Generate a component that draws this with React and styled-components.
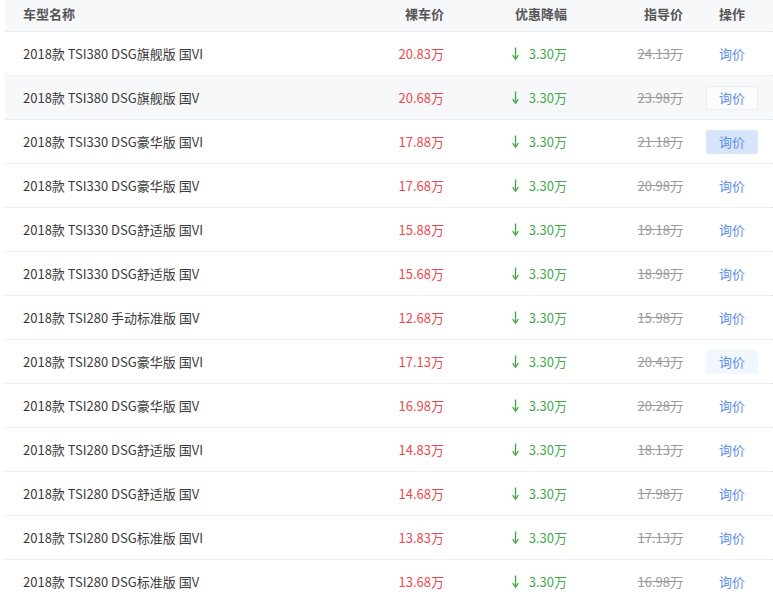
import React from 'react';
import styled, { createGlobalStyle, css } from 'styled-components';

const GlobalStyle = createGlobalStyle`
  body {
    margin: 0;
    background: #fff;
    font-family: "Microsoft YaHei", "Noto Sans CJK SC", "Noto Sans", sans-serif;
  }
`;

const rows = [
  { name: '2018款 TSI380 DSG旗舰版 国VI', price: '20.83万', guide: '24.13万' },
  { name: '2018款 TSI380 DSG旗舰版 国V', price: '20.68万', guide: '23.98万', hover: true, btn: 'outline' },
  { name: '2018款 TSI330 DSG豪华版 国VI', price: '17.88万', guide: '21.18万', btn: 'active' },
  { name: '2018款 TSI330 DSG豪华版 国V', price: '17.68万', guide: '20.98万' },
  { name: '2018款 TSI330 DSG舒适版 国VI', price: '15.88万', guide: '19.18万' },
  { name: '2018款 TSI330 DSG舒适版 国V', price: '15.68万', guide: '18.98万' },
  { name: '2018款 TSI280 手动标准版 国V', price: '12.68万', guide: '15.98万' },
  { name: '2018款 TSI280 DSG豪华版 国VI', price: '17.13万', guide: '20.43万', btn: 'soft' },
  { name: '2018款 TSI280 DSG豪华版 国V', price: '16.98万', guide: '20.28万' },
  { name: '2018款 TSI280 DSG舒适版 国VI', price: '14.83万', guide: '18.13万' },
  { name: '2018款 TSI280 DSG舒适版 国V', price: '14.68万', guide: '17.98万' },
  { name: '2018款 TSI280 DSG标准版 国VI', price: '13.83万', guide: '17.13万' },
  { name: '2018款 TSI280 DSG标准版 国V', price: '13.68万', guide: '16.98万' },
];

const Table = styled.div`
  margin-left: 5px;
  width: 768px;
  font-size: 13px;
`;

const Line = styled.div`
  display: grid;
  grid-template-columns: 1fr 110px 123px 116px 77px;
  align-items: center;
  box-sizing: border-box;
  border-bottom: 1px dotted #e2e2e2;
`;

const HeadLine = styled(Line)`
  height: 32px;
  padding-bottom: 4px;
  background: #f7f8fa;
  color: #555;
  font-weight: bold;
`;

const BodyLine = styled(Line)`
  height: 44px;
  background: ${p => (p.$hover ? '#f7f8fa' : '#fff')};
`;

const Cell = styled.div`
  text-align: ${p => p.$align || 'right'};
  padding-right: ${p => (p.$align === 'left' ? 0 : p.$align === 'center' ? 5 : 13)}px;
  padding-left: ${p => (p.$align === 'left' ? 18 : 0)}px;
  white-space: nowrap;
`;

const Name = styled(Cell)`
  color: #3a3a3a;
`;

const Price = styled(Cell)`
  color: #ea4a4f;
`;

const Cut = styled(Cell)`
  color: #9a9a9a;
  text-decoration: line-through;
`;

const Discount = styled(Cell)`
  color: #45a84c;
  display: flex;
  justify-content: flex-end;
  align-items: center;
  gap: 10px;
`;

const Ask = styled.span`
  display: inline-block;
  width: 52px;
  height: 24px;
  line-height: 24px;
  box-sizing: border-box;
  color: #5d8ee8;
  border-radius: 2px;
  ${p => p.$variant === 'active' && css`background: #d7e5fc;`}
  ${p => p.$variant === 'soft' && css`background: #f1f6ff;`}
  ${p => p.$variant === 'outline' && css`background: #fbfcfd; border: 1px solid #eceef1; line-height: 22px;`}
`;

const Arrow = () => (
  <svg width="7" height="13" viewBox="0 0 7 13">
    <path d="M3.5 0.5 V11.5" stroke="#45a84c" strokeWidth="1.4" fill="none" />
    <path d="M0.6 8.2 L3.5 12.2 L6.4 8.2" stroke="#45a84c" strokeWidth="1.3" fill="none" />
  </svg>
);

export default function App() {
  return (
    <>
      <GlobalStyle />
      <Table>
        <HeadLine>
          <Cell $align="left">车型名称</Cell>
          <Cell>裸车价</Cell>
          <Cell>优惠降幅</Cell>
          <Cell>指导价</Cell>
          <Cell $align="center">操作</Cell>
        </HeadLine>
        {rows.map(r => (
          <BodyLine key={r.name} $hover={r.hover}>
            <Name $align="left">{r.name}</Name>
            <Price>{r.price}</Price>
            <Discount>
              <Arrow />
              <span>3.30万</span>
            </Discount>
            <Cut>{r.guide}</Cut>
            <Cell $align="center">
              <Ask $variant={r.btn}>询价</Ask>
            </Cell>
          </BodyLine>
        ))}
      </Table>
    </>
  );
}
